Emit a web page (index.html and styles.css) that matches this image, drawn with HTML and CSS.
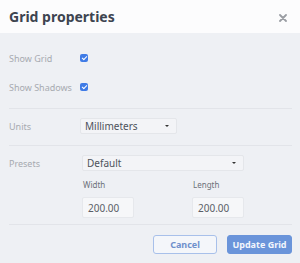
FILE: index.html
```html
<!DOCTYPE html>
<html lang="en">
<head>
    <meta charset="UTF-8">
    <title>Grid properties</title>
    <link rel="stylesheet" href="styles.css">
</head>
<body>
    <div class="dialog">
        <div class="header">
            <h1>Grid properties</h1>
            <svg class="close" width="8" height="8" viewBox="0 0 8 8">
                <path d="M1 1L7 7M7 1L1 7" stroke="#9a9da3" stroke-width="1.8" stroke-linecap="round"/>
            </svg>
        </div>

        <div class="content">
            <div class="row check-row first">
                <span class="label">Show Grid</span>
                <span class="check"></span>
            </div>
            <div class="row check-row">
                <span class="label">Show Shadows</span>
                <span class="check"></span>
            </div>

            <hr class="divider">

            <div class="row select-row">
                <span class="label">Units</span>
                <div class="select units">Millimeters<span class="caret"></span></div>
            </div>

            <hr class="divider">

            <div class="row select-row">
                <span class="label">Presets</span>
                <div class="select presets">Default<span class="caret"></span></div>
            </div>

            <!-- size inputs -->
            <div class="sizes">
                <div class="field">
                    <span class="field-label">Width</span>
                    <div class="input">200.00</div>
                </div>
                <div class="field">
                    <span class="field-label">Length</span>
                    <div class="input">200.00</div>
                </div>
            </div>

            <hr class="divider last">

            <div class="actions">
                <button class="btn btn-outline">Cancel</button>
                <button class="btn btn-primary">Update Grid</button>
            </div>
        </div>
    </div>
</body>
</html>
```

FILE: styles.css
```css
body {
    margin: 0;
    background: #eef0f4;
    font-family: "Noto Sans", "Open Sans", sans-serif;
}
.dialog {
    width: 300px;
    height: 263px;
}
.header {
    height: 33px;
    background: #fcfcfd;
    display: flex;
    align-items: center;
    justify-content: space-between;
    padding: 0 13px 0 9px;
}
.header h1 {
    margin: 0;
    font-size: 14px;
    font-weight: 700;
    color: #3d4450;
}
.close {
    display: block;
    margin-top: 2px;
}
.content {
    padding: 0 8px 0 9px;
}
.row {
    display: flex;
    align-items: center;
}
.label {
    width: 71px;
    font-size: 9px;
    color: #a7aab0;
}
.check-row {
    height: 16px;
    margin-top: 13px;
}
.check-row.first {
    margin-top: 17px;
}
.check {
    width: 8px;
    height: 8px;
    border-radius: 2px;
    background: #3f7be6;
    position: relative;
}
.check::after {
    content: "";
    position: absolute;
    left: 2.5px;
    top: 1px;
    width: 2px;
    height: 4px;
    border: solid #fff;
    border-width: 0 1.2px 1.2px 0;
    transform: rotate(45deg);
}
.divider {
    border: none;
    border-top: 1px solid #e2e4e9;
    margin: 13px 0 0;
}
.select-row {
    margin-top: 9px;
    height: 16px;
}
.select-row + .divider {
    margin-top: 11px;
}
.select {
    height: 16px;
    box-sizing: border-box;
    background: #f3f4f7;
    border: 1px solid #e4e6ea;
    border-radius: 2px;
    font-size: 10px;
    color: #4d525b;
    display: flex;
    align-items: center;
    justify-content: space-between;
    padding: 0 7px 0 4px;
}
.units {
    width: 97px;
}
.presets {
    width: 162px;
    margin-left: 2px;
}
.caret {
    width: 0;
    height: 0;
    border-left: 2px solid transparent;
    border-right: 2px solid transparent;
    border-top: 2px solid #333;
}
.sizes {
    display: flex;
    gap: 58px;
    margin-left: 73px;
    margin-top: 8px;
}
.field {
    display: flex;
    flex-direction: column;
}
.field-label {
    font-size: 8px;
    color: #6c7079;
    height: 12px;
    line-height: 12px;
    padding-left: 1px;
}
.input {
    margin-top: 6px;
    width: 52px;
    height: 21px;
    box-sizing: border-box;
    background: #f6f7f9;
    border: 1px solid #e6e8ec;
    border-radius: 2px;
    font-size: 10px;
    color: #5a5e66;
    display: flex;
    align-items: center;
    padding-left: 5px;
}
.divider.last {
    margin-top: 6px;
}
.actions {
    display: flex;
    justify-content: flex-end;
    gap: 10px;
    margin-top: 10px;
}
.btn {
    height: 19px;
    border-radius: 3px;
    font-family: inherit;
    font-size: 9px;
    font-weight: 700;
    padding: 0;
}
.btn-outline {
    width: 64px;
    background: #f4f6fa;
    border: 1px solid #a8c0ea;
    color: #6f90cc;
}
.btn-primary {
    width: 65px;
    background: #6a94da;
    border: 1px solid #6a94da;
    color: #f3f6fc;
}
```
